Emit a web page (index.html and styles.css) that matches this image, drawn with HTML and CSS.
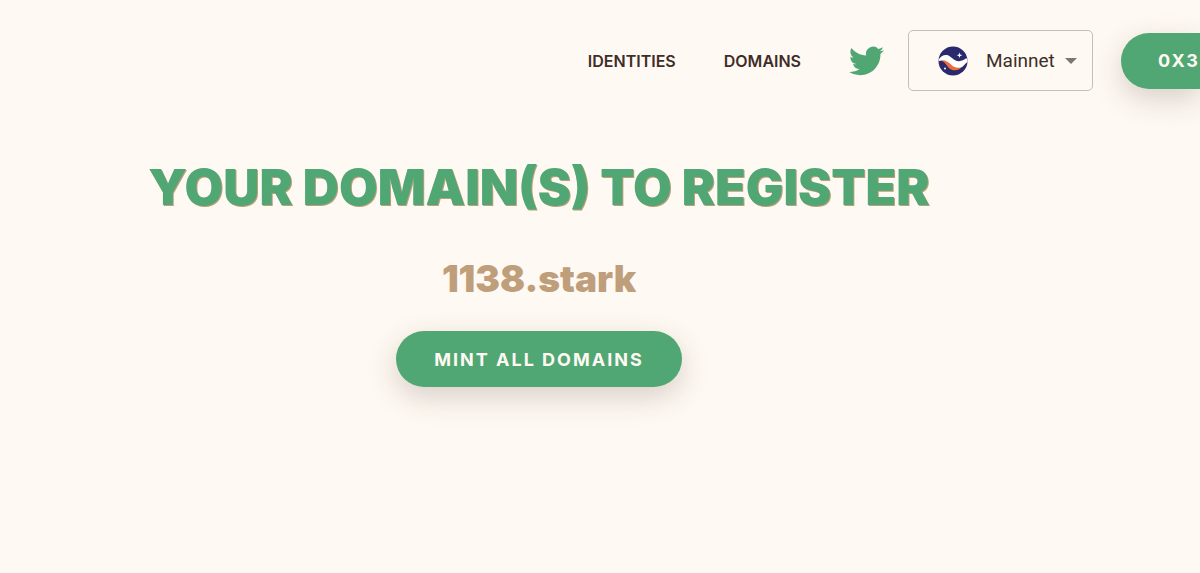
FILE: index.html
```html
<!DOCTYPE html>
<html lang="en">
<head>
<meta charset="utf-8">
<title>Your domains to register</title>
<link rel="stylesheet" href="styles.css">
</head>
<body>
<header class="navbar">
  <nav class="links">
    <a class="link" href="#identities">Identities</a>
    <a class="link" href="#domains">Domains</a>
  </nav>
  <a class="twitter" href="#twitter" aria-label="Twitter">
    <svg class="bird" viewBox="0 2 24 20" aria-hidden="true"><path d="M23.953 4.57a10 10 0 01-2.825.775 4.958 4.958 0 002.163-2.723c-.951.555-2.005.959-3.127 1.184a4.92 4.92 0 00-8.384 4.482C7.69 8.095 4.067 6.13 1.64 3.162a4.822 4.822 0 00-.666 2.475c0 1.71.87 3.213 2.188 4.096a4.904 4.904 0 01-2.228-.616v.06a4.923 4.923 0 003.946 4.827 4.996 4.996 0 01-2.212.085 4.936 4.936 0 004.604 3.417 9.867 9.867 0 01-6.102 2.105c-.39 0-.779-.023-1.17-.067a13.995 13.995 0 007.557 2.209c9.053 0 13.998-7.496 13.998-13.985 0-.21 0-.42-.015-.63A9.935 9.935 0 0024 4.59z"/></svg>
  </a>
  <div class="network">
    <svg class="network-logo" viewBox="0 0 30 30" aria-hidden="true">
      <circle cx="15" cy="15" r="14.5" fill="#29296e"/>
      <path d="M.6 15C5 14 7 17 10 21C14 26 22 25.500 25.500 19L20 17L8 11Z" fill="#ec6b3b"/>
      <path d="M.7 13.500C3 9.500 8 7.500 12 10.500C16 13.500 18 16 22 15C25 14.500 27 12.800 28.900 12.200C29.500 14 29.500 15 29.300 16C27.500 17.500 27 18.500 25 20.300C21 23 16.500 22 13 18.500C9 14.500 5 13 .6 15.200Z" fill="#fff"/>
      <path d="M21.500 6.500L22.200 8.600L24.300 9.300L22.200 10L21.500 12.100L20.800 10L18.700 9.300L20.800 8.600Z" fill="#fff"/>
      <circle cx="7" cy="22.500" r="1" fill="#fff"/>
    </svg>
    <select class="network-select" aria-label="Network"><option>Mainnet</option></select>
    <svg class="caret" viewBox="0 0 12 6" aria-hidden="true"><path d="M0 0H12L6 6Z"/></svg>
  </div>
  <button class="button wallet" type="button">0x3</button>
</header>
<main class="content">
  <h1 class="title">Your domain(s) to register</h1>
  <h2 class="domain">1138.stark</h2>
  <button class="button" type="button">Mint all domains</button>
</main>
</body>
</html>
```
FILE: styles.css
```css
* { box-sizing: border-box; }

body {
  margin: 0;
  min-height: 100vh;
  background: #fef9f2;
  color: #402d28;
  font-family: Inter, "Liberation Sans", sans-serif;
}

.navbar {
  display: flex;
  align-items: center;
  justify-content: flex-end;
  height: 121px;
}

.links {
  display: flex;
  gap: 48px;
}

.link {
  color: #402d28;
  font-size: 16px;
  font-weight: 600;
  line-height: 24px;
  text-decoration: none;
  text-transform: uppercase;
}

.twitter {
  display: flex;
  margin: 0 24px 0 48px;
}

.bird {
  width: 35px;
  height: 30px;
  fill: #50a773;
}

.network {
  position: relative;
  display: flex;
  align-items: center;
  height: 61px;
  border: 1px solid #c4bfba;
  border-radius: 5px;
}

.network-logo {
  position: absolute;
  left: 29px;
  width: 30px;
  height: 30px;
  pointer-events: none;
}

.network-select {
  appearance: none;
  height: 100%;
  padding: 0 37px 0 77px;
  border: 0;
  background: transparent;
  color: #402d28;
  font: 19px Roboto, sans-serif;
}

.caret {
  position: absolute;
  right: 15px;
  width: 12px;
  height: 6px;
  fill: #7b7673;
  pointer-events: none;
}

.button {
  height: 56px;
  padding: 0 38px;
  border: 0;
  border-radius: 28px;
  background: #50a773;
  box-shadow: 0 10px 30px rgba(64, 45, 40, 0.2);
  color: #fef9f2;
  font: 700 18px Inter, "Liberation Sans", sans-serif;
  letter-spacing: 2px;
  text-transform: uppercase;
}

.wallet {
  flex: none;
  margin-left: 28px;
  padding: 0 0 0 37px;
  border-radius: 28px 0 0 28px;
}

.content {
  display: flex;
  flex-direction: column;
  align-items: center;
  padding: 36px 122px 32px 0;
}

.title {
  margin: 0;
  color: #50a773;
  font-size: 50px;
  font-weight: 900;
  line-height: 60px;
  text-shadow: 1px 1px 0 #bf9e7b;
  text-transform: uppercase;
}

.domain {
  margin: 36px 0 26px;
  color: #bf9e7b;
  font-size: 37px;
  font-weight: 900;
  line-height: 52px;
}
```
